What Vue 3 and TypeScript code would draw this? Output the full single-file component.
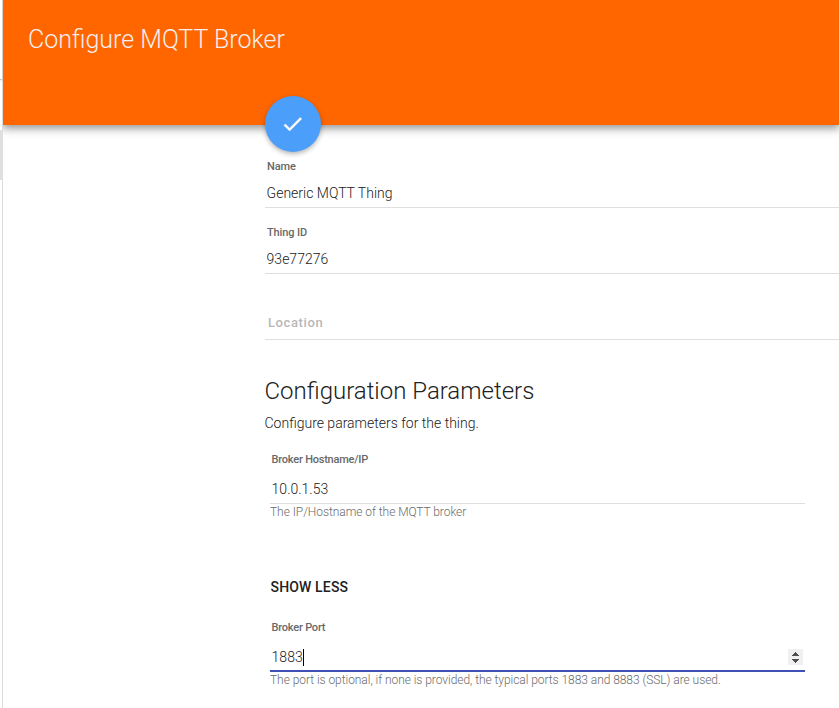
<script setup lang="ts">
import { ref } from 'vue'

interface Field {
  label: string
  value: string
}

const details: Field[] = [
  { label: 'Name', value: 'Generic MQTT Thing' },
  { label: 'Thing ID', value: '93e77276' },
]
const port = ref(1883)

function step(delta: number): void {
  port.value += delta
}
</script>

<template>
  <div class="page">
    <aside class="edge">
      <div class="edge-top"></div>
      <div class="edge-gap"></div>
      <div class="edge-thumb"></div>
    </aside>
    <div class="panel">
      <header class="toolbar">
        <h1 class="title">Configure MQTT Broker</h1>
        <button class="fab" type="button" aria-label="Save">
          <svg width="24" height="24" viewBox="0 0 24 24">
            <path fill="#fff" stroke="#fff" stroke-width="0.5" d="M8.6 16.2 4.4 12l-1.4 1.4L8.6 19 20.6 7l-1.4-1.4z" />
          </svg>
        </button>
      </header>
      <main class="content">
        <section class="details">
          <div v-for="field in details" :key="field.label" class="field">
            <div class="label">{{ field.label }}</div>
            <div class="value">{{ field.value }}</div>
          </div>
          <div class="field location">Location</div>
        </section>
        <h2 class="heading">Configuration Parameters</h2>
        <p class="intro">Configure parameters for the thing.</p>
        <section class="params">
          <div class="param">
            <div class="label">Broker Hostname/IP</div>
            <div class="value">10.0.1.53</div>
          </div>
          <div class="hint">The IP/Hostname of the MQTT broker</div>
          <button class="toggle" type="button">SHOW LESS</button>
          <div class="param focused">
            <div class="label">Broker Port</div>
            <div class="value port">
              <span>{{ port }}</span><i class="caret"></i>
              <div class="spinner">
                <svg width="15" height="16" viewBox="0 0 15 16" shape-rendering="crispEdges">
                  <path fill="#505050" d="M7 3h1v1h1v1h1v1h1v1H4V6h1V5h1V4h1z" @click="step(1)" />
                  <path fill="#505050" d="M4 10h7v1h-1v1H9v1H8v1H7v-1H6v-1H5v-1H4z" @click="step(-1)" />
                </svg>
              </div>
            </div>
          </div>
          <div class="hint">
            The port is optional, if none is provided, the typical ports 1883 and 8883 (SSL) are used.
          </div>
        </section>
      </main>
    </div>
  </div>
</template>

<style>
body {
  margin: 0;
  background: #fff;
}
</style>

<style scoped>
.page {
  display: flex;
  width: 100%;
  height: 708px;
  overflow: hidden;
  background: #fff;
  font-family: Roboto, "Liberation Sans", sans-serif;
  font-weight: 300;
  color: #212121;
  white-space: nowrap;
}
.edge {
  display: flex;
  flex-direction: column;
  flex: 0 0 2px;
  border-right: 1px solid #dcdcdc;
}
.edge-top {
  height: 79px;
  border-bottom: 1px solid #c4c4c4;
  box-shadow: 0 1px 3px rgba(0, 0, 0, 0.15);
}
.edge-gap {
  height: 50px;
}
.edge-thumb {
  height: 50px;
  margin-right: -1px;
  background: #dfdfdf;
}
.panel {
  flex: 1;
  min-width: 0;
}
.toolbar {
  position: relative;
  box-sizing: border-box;
  height: 125px;
  padding: 24px 25px;
  background: #ff6600;
  box-shadow: 0 2px 9px 1px rgba(0, 0, 0, 0.45);
  clip-path: inset(0 0 -40px 0);
}
.title {
  margin: 0;
  font-size: 25px;
  font-weight: 300;
  line-height: 32px;
  color: #f5eeee;
}
.fab {
  position: absolute;
  left: 262px;
  bottom: -27px;
  display: flex;
  align-items: center;
  justify-content: center;
  width: 56px;
  height: 56px;
  padding: 0;
  border: 0;
  border-radius: 50%;
  background: #4b9ffb;
  box-shadow: 0 2px 5px rgba(0, 0, 0, 0.3);
}
.content {
  padding: 17px 0 0 262px;
}
.field {
  padding: 17px 0 4px 1.6px;
  border-bottom: 1px solid #dfdfdf;
}
.label {
  font-size: 11px;
  font-weight: 500;
  line-height: 16px;
  letter-spacing: -0.1px;
  color: #686868;
}
.field .label {
  padding-left: 0.4px;
}
.value {
  padding-top: 8px;
  font-size: 14px;
  line-height: 20px;
}
.location {
  padding: 39px 0 6px 3px;
  font-size: 13px;
  font-weight: 500;
  line-height: 20px;
  letter-spacing: 0.6px;
  color: #b8b8b8;
}
.heading {
  margin: 35px 0 0 -0.5px;
  font-size: 24px;
  font-weight: 300;
  line-height: 32px;
}
.intro {
  margin: 6px 0 19px -0.5px;
  font-size: 14px;
  line-height: 20px;
}
.params {
  width: 535px;
  padding-left: 5px;
}
.param {
  padding: 0 0 4px 1.6px;
  border-bottom: 1px solid #dfdfdf;
}
.param .label {
  letter-spacing: -0.22px;
}
.param .value {
  padding-top: 11px;
}
.focused {
  padding-bottom: 3px;
  border-bottom: 2px solid #3f51b5;
}
.hint {
  font-size: 12px;
  line-height: 16px;
  letter-spacing: -0.055px;
  color: #6c6c6c;
}
.toggle {
  display: block;
  margin: 57px 0 23px;
  padding: 0 0 0 0.5px;
  border: 0;
  background: none;
  font: 500 14px/20px Roboto, "Liberation Sans", sans-serif;
  letter-spacing: 0.15px;
  color: #212121;
}
.port {
  display: flex;
  align-items: center;
}
.caret {
  width: 1px;
  height: 17px;
  background: #000;
}
.spinner {
  width: 15px;
  height: 16px;
  margin: 0 2px 0 auto;
  background: #f0f0f0;
}
.spinner svg {
  display: block;
}
</style>
